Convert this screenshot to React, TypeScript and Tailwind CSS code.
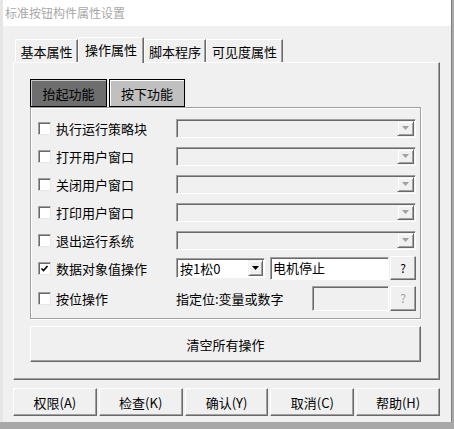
import React from "react";

const F = "font-['Noto_Sans_CJK_SC','Liberation_Sans',sans-serif]";

function Tri({ color }: { color: string }) {
  return (
    <svg width="7" height="4" viewBox="0 0 7 4">
      <polygon points="0,0 7,0 3.5,4" fill={color} />
    </svg>
  );
}

function Check({ checked }: { checked?: boolean }) {
  return (
    <div className="w-[13px] h-[13px] shrink-0 bg-white border border-t-[#a0a0a0] border-l-[#a0a0a0] border-b-[#e8e8e8] border-r-[#e8e8e8] shadow-[inset_1px_1px_0_#696969] flex items-center justify-center">
      {checked && (
        <svg width="9" height="9" viewBox="0 0 9 9">
          <path d="M1.5 4.5 L3.5 6.5 L7.5 2" stroke="#000" strokeWidth="1.6" fill="none" />
        </svg>
      )}
    </div>
  );
}

function ArrowBtn({ enabled, w = 17 }: { enabled?: boolean; w?: number }) {
  return (
    <div
      className="h-full shrink-0 flex items-center justify-center bg-[#f0f0f0] border border-t-[#f0f0f0] border-l-[#f0f0f0] border-b-[#696969] border-r-[#696969] shadow-[inset_1px_1px_0_white,inset_-1px_-1px_0_#a0a0a0]"
      style={{ width: w }}
    >
      <Tri color={enabled ? "#000" : "#a0a0a0"} />
    </div>
  );
}

const sunken =
  "border border-t-[#a0a0a0] border-l-[#a0a0a0] border-b-white border-r-white shadow-[inset_1px_1px_0_#696969]";

function Combo() {
  return (
    <div className={`w-[240px] h-[19px] flex p-[1px] bg-[#f0f0f0] ${sunken}`}>
      <div className="flex-1" />
      <ArrowBtn />
    </div>
  );
}

const raised =
  "border border-t-white border-l-white border-b-[#696969] border-r-[#696969] shadow-[inset_-1px_-1px_0_#a0a0a0]";

function Row({ label, checked, children, h = 28 }: { label: string; checked?: boolean; children?: React.ReactNode; h?: number }) {
  return (
    <div className="flex items-center" style={{ height: h }}>
      <Check checked={checked} />
      <div className="w-[125px] pl-[5px] text-[13px] leading-none text-black">{label}</div>
      {children}
    </div>
  );
}

function Tab({ label, w, selected }: { label: string; w: number; selected?: boolean }) {
  return (
    <div
      className={`flex items-center justify-center text-[13px] leading-none text-black bg-[#f0f0f0] border-l border-t border-white border-r border-r-[#696969] shadow-[inset_-1px_0_0_#a0a0a0] ${
        selected ? "h-[26px] -mb-[1px] relative z-10 pb-[3px]" : "h-[23px]"
      }`}
      style={{ width: w }}
    >
      {label}
    </div>
  );
}

export default function App() {
  return (
    <div className={`w-[454px] h-[429px] bg-[#a8a8a8] ${F} overflow-hidden`}>
      <div className="w-[451px] h-[422px] flex flex-col bg-[#f0f0f0] border-l-[3px] border-l-[#e6e6e6] shadow-[1px_0_0_#808080]">
        {/* title bar */}
        <div className="h-[26px] bg-white flex items-center pl-[2px] text-[12px] leading-none text-[#a8a8a8]">
          标准按钮构件属性设置
        </div>
        {/* body */}
        <div className="flex-1 flex flex-col pl-[10px] pr-[11px] pt-[11px]">
          {/* tabs */}
          <div className="flex items-end pl-[2px] h-[25px]">
            <Tab label="基本属性" w={63} />
            <Tab label="操作属性" w={66} selected />
            <Tab label="脚本程序" w={62} />
            <Tab label="可见度属性" w={77} />
          </div>
          {/* panel */}
          <div className="h-[318px] border border-t-white border-l-white border-b-[#696969] border-r-[#696969] shadow-[inset_-1px_-1px_0_#a0a0a0] pl-[16px] pr-[18px] pt-[16px] flex flex-col">
            <div className="flex gap-[2px] h-[28px]">
              <div className="w-[77px] h-full flex items-center justify-center bg-[#6e6e6e] border border-black shadow-[inset_1px_1px_0_#c8c8c8] text-[13px] leading-none text-black">
                抬起功能
              </div>
              <div className="w-[76px] h-full flex items-center justify-center bg-[#c0c0c0] border border-black shadow-[inset_1px_1px_0_white] text-[13px] leading-none text-black">
                按下功能
              </div>
            </div>
            <div className="w-[391px] h-[212px] border border-[#a0a0a0] shadow-[inset_1px_1px_0_white,1px_1px_0_white] pl-[7px] pt-[6px] flex flex-col">
              <Row label="执行运行策略块"><Combo /></Row>
              <Row label="打开用户窗口"><Combo /></Row>
              <Row label="关闭用户窗口"><Combo /></Row>
              <Row label="打印用户窗口"><Combo /></Row>
              <Row label="退出运行系统"><Combo /></Row>
              <Row label="数据对象值操作" checked>
                <div className={`w-[89px] h-[20px] flex p-[1px] bg-white ${sunken}`}>
                  <div className="flex-1 flex items-center pl-[2px] text-[13px] leading-none text-black">按1松0</div>
                  <ArrowBtn enabled w={15} />
                </div>
                <div className={`ml-[5px] w-[119px] h-[23px] bg-white ${sunken} flex items-start pl-[2px] pt-[3px] text-[13px] leading-none text-black`}>
                  电机停止
                </div>
                <div className={`w-[26px] h-[24px] ml-[1px] flex items-center justify-center bg-[#f0f0f0] ${raised} text-[12px] leading-none text-black`}>
                  ?
                </div>
              </Row>
              <Row label="按位操作" h={32}>
                <div className="w-[136px] text-[13px] leading-none text-black whitespace-nowrap">指定位:变量或数字</div>
                <div className={`w-[77px] h-[25px] bg-[#f0f0f0] ${sunken}`} />
                <div className={`w-[26px] h-[25px] ml-[1px] flex items-center justify-center bg-[#f0f0f0] ${raised} text-[12px] leading-none text-[#a0a0a0]`}>
                  ?
                </div>
              </Row>
            </div>
            <div className={`mt-[7px] w-[391px] h-[36px] flex items-center justify-center bg-[#f0f0f0] ${raised} text-[13px] leading-none text-black`}>
              清空所有操作
            </div>
          </div>
          {/* bottom buttons */}
          <div className="flex gap-[2px] mt-[8px]">
            {["权限(A)", "检查(K)", "确认(Y)", "取消(C)", "帮助(H)"].map((t) => (
              <div key={t} className={`w-[84px] h-[28px] flex items-center justify-center bg-[#f0f0f0] ${raised} text-[13px] leading-none text-black`}>
                {t}
              </div>
            ))}
          </div>
        </div>
      </div>
    </div>
  );
}
